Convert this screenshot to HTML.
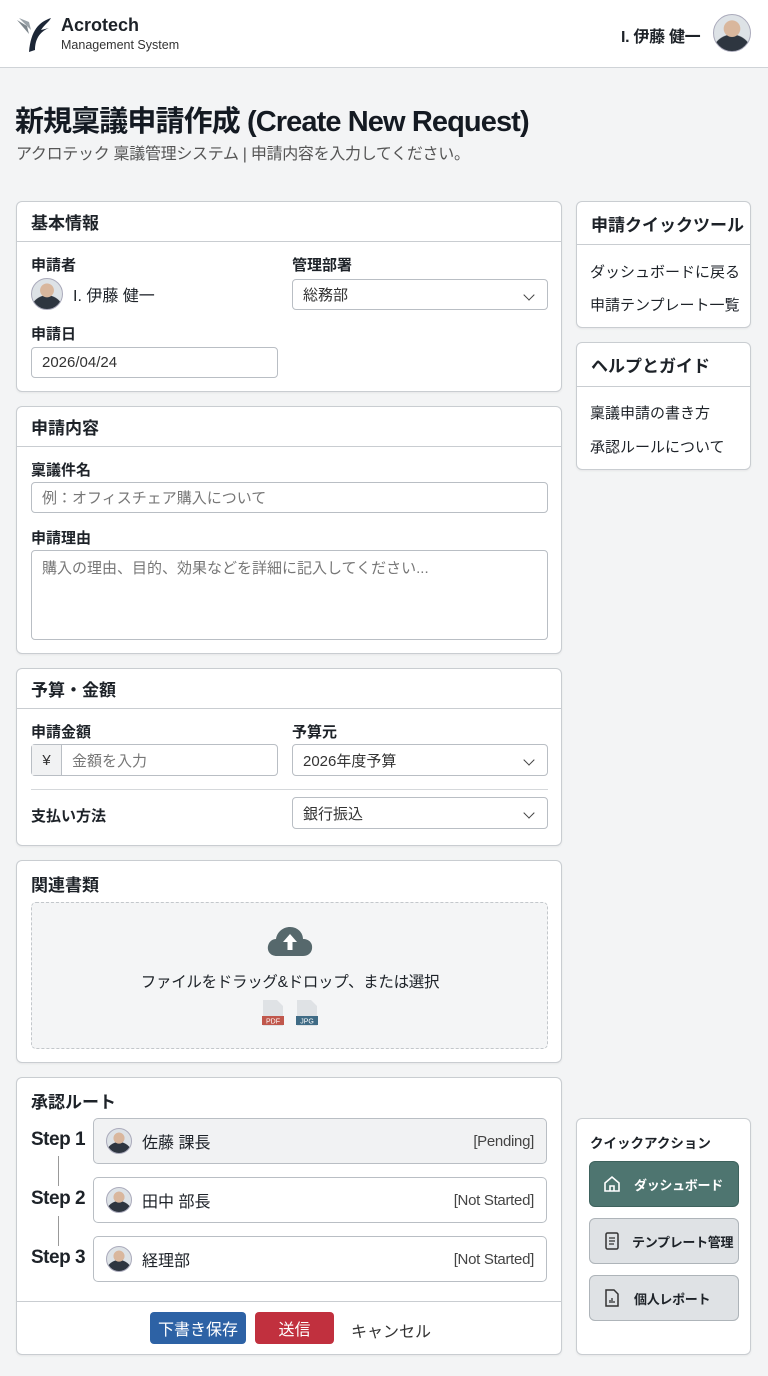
<!DOCTYPE html>
<html><head><meta charset="utf-8"><style>
*{box-sizing:border-box;margin:0;padding:0}
body{width:768px;height:1376px;background:#f3f4f5;font-family:"Liberation Sans","Noto Sans CJK JP",sans-serif;color:#1d2228;position:relative;overflow:hidden}
.a{position:absolute}
.card{position:absolute;background:#fff;border:1px solid #c9cdd1;border-radius:6px;box-shadow:0 1px 2px rgba(0,0,0,.06)}
.ch{position:absolute;left:0;right:0;top:0;height:40px;border-bottom:1px solid #c9cdd1;font-weight:bold;font-size:17px;padding:7px 0 0 14px}
.lbl{position:absolute;font-weight:bold;font-size:15px}
.inp{position:absolute;border:1px solid #b9bec4;border-radius:4px;background:#fff;font-size:15px;padding:0 10px;display:flex;align-items:center;color:#333}
.ph{color:#777}
.sel::after{content:"";position:absolute;right:14px;top:11px;width:7px;height:7px;border-right:1.6px solid #444;border-bottom:1.6px solid #444;transform:rotate(45deg)}
.step{position:absolute;left:30px;font-weight:bold;font-size:19px;letter-spacing:-0.5px}
.sbox{position:absolute;left:93px;width:454px;height:46px;border:1px solid #b9bec4;border-radius:5px;display:flex;align-items:center;padding:0 12px;font-size:16px}
.sbox .st{margin-left:auto;color:#444;font-size:15px;letter-spacing:-0.3px}
.av{width:26px;height:26px;border-radius:50%;background:radial-gradient(circle at 50% 38%,#d9b79d 0 28%,transparent 30%),radial-gradient(circle at 50% 110%,#2e3640 0 45%,transparent 47%),#dde2e6;border:1px solid #aab;margin-right:10px}
.rl{position:absolute;left:13px;font-size:15px}
.qa{position:absolute;left:12px;width:150px;height:46px;border-radius:6px;border:1px solid #aeb4b9;background:#dfe2e5;display:flex;align-items:center;padding-left:12px;font-weight:bold;font-size:13px;white-space:nowrap;letter-spacing:-0.3px}
</style></head><body>
<div class="a" style="left:0;top:0;width:768px;height:68px;background:#fff;border-bottom:1px solid #cfd3d7"></div>
<svg class="a" style="left:15px;top:16px" width="38" height="38" viewBox="0 0 38 38"><path d="M2 4 L14 18 L12 10 Z" fill="#7d868c"/><path d="M4 2 L16 14 L14 6Z" fill="#9aa2a8"/><path d="M36 2 C24 6 16 14 14 36 L20 34 C20 24 24 16 34 12 L26 14 C30 8 34 6 36 2Z" fill="#1c2636"/></svg>
<div class="a" style="left:61px;top:15px;font-size:18px;font-weight:bold">Acrotech</div>
<div class="a" style="left:61px;top:38px;font-size:12.5px;color:#333">Management System</div>
<div class="a" style="left:621px;top:23px;font-size:16px;font-weight:bold;letter-spacing:-0.3px">I. 伊藤 健一</div>
<div class="a av" style="left:713px;top:14px;width:38px;height:38px"></div>
<div class="a" style="left:15px;top:98px;font-size:29px;font-weight:bold;color:#141a22;letter-spacing:-0.9px">新規稟議申請作成 (Create New Request)</div>
<div class="a" style="left:16px;top:140px;font-size:16px;color:#555;letter-spacing:-0.3px">アクロテック 稟議管理システム | 申請内容を入力してください。</div>

<div class="card" style="left:16px;top:201px;width:546px;height:191px">
<div class="ch">基本情報</div>
<div class="lbl" style="left:14px;top:52px">申請者</div>
<div class="a" style="left:14px;top:76px;display:flex;align-items:center;font-size:16px"><div class="av" style="width:32px;height:32px"></div>I. 伊藤 健一</div>
<div class="lbl" style="left:275px;top:52px">管理部署</div>
<div class="inp sel" style="left:275px;top:77px;width:256px;height:31px">総務部</div>
<div class="lbl" style="left:14px;top:121px">申請日</div>
<div class="inp" style="left:14px;top:145px;width:247px;height:31px">2026/04/24</div>
</div>

<div class="card" style="left:16px;top:406px;width:546px;height:248px">
<div class="ch">申請内容</div>
<div class="lbl" style="left:14px;top:52px">稟議件名</div>
<div class="inp" style="left:14px;top:75px;width:517px;height:31px"><span class="ph">例：オフィスチェア購入について</span></div>
<div class="lbl" style="left:14px;top:120px">申請理由</div>
<div class="inp" style="left:14px;top:143px;width:517px;height:90px;align-items:flex-start;padding-top:6px"><span class="ph">購入の理由、目的、効果などを詳細に記入してください...</span></div>
</div>

<div class="card" style="left:16px;top:668px;width:546px;height:178px">
<div class="ch">予算・金額</div>
<div class="lbl" style="left:14px;top:52px">申請金額</div>
<div class="inp" style="left:14px;top:75px;width:247px;height:32px;padding:0"><span style="width:30px;height:100%;border-right:1px solid #b9bec4;background:#f1f2f3;display:flex;align-items:center;justify-content:center">¥</span><span class="ph" style="padding-left:10px">金額を入力</span></div>
<div class="lbl" style="left:275px;top:52px">予算元</div>
<div class="inp sel" style="left:275px;top:75px;width:256px;height:32px">2026年度予算</div>
<div class="a" style="left:14px;top:120px;width:517px;border-top:1px solid #d5d8db"></div>
<div class="lbl" style="left:14px;top:136px">支払い方法</div>
<div class="inp sel" style="left:275px;top:128px;width:256px;height:32px">銀行振込</div>
</div>

<div class="card" style="left:16px;top:860px;width:546px;height:203px">
<div class="lbl" style="left:14px;top:10px;font-size:17px">関連書類</div>
<div class="a" style="left:14px;top:41px;width:517px;height:147px;border:1.5px dashed #c3c7cb;border-radius:5px;background:#f4f5f6"></div>
<svg class="a" style="left:250px;top:64px" width="46" height="32" viewBox="0 0 46 32"><path d="M10 31 C3 31 0 26 1 21 C2 16 6 14 9 14 C10 7 16 2 23 2 C31 2 36 8 36 14 C42 14 46 18 45 24 C44 29 40 31 36 31 Z" fill="#56686c"/><path d="M23 9 L16 17 L20.5 17 L20.5 25 L25.5 25 L25.5 17 L30 17Z" fill="#fff"/></svg>
<div class="a" style="left:0;width:546px;top:109px;text-align:center;font-size:15.5px;letter-spacing:-0.3px">ファイルをドラッグ&amp;ドロップ、または選択</div>
<svg class="a" style="left:245px;top:139px" width="22" height="28" viewBox="0 0 22 28"><path d="M1 0 H15 L21 6 V26 H1Z" fill="#dfe2e5"/><rect x="0" y="16" width="22" height="9" fill="#c0574c"/><text x="11" y="23.5" font-size="7" fill="#fff" text-anchor="middle" font-family="Liberation Sans">PDF</text></svg>
<svg class="a" style="left:279px;top:139px" width="22" height="28" viewBox="0 0 22 28"><path d="M1 0 H15 L21 6 V26 H1Z" fill="#dfe2e5"/><rect x="0" y="16" width="22" height="9" fill="#3f6b85"/><text x="11" y="23.5" font-size="7" fill="#fff" text-anchor="middle" font-family="Liberation Sans">JPG</text></svg>
</div>

<div class="card" style="left:16px;top:1077px;width:546px;height:278px">
<div class="lbl" style="left:14px;top:10px;font-size:17px">承認ルート</div>
<div class="a" style="left:41px;top:78px;height:30px;border-left:1px solid #999"></div>
<div class="a" style="left:41px;top:138px;height:30px;border-left:1px solid #999"></div>
<div class="a" style="left:0;right:0;top:223px;border-top:1px solid #c9cdd1"></div>
<div class="a" style="left:133px;top:234px;width:96px;height:32px;background:#2d62a5;border-radius:4px;color:#fff;font-size:16px;display:flex;align-items:center;justify-content:center">下書き保存</div>
<div class="a" style="left:238px;top:234px;width:79px;height:32px;background:#c1303e;border-radius:4px;color:#fff;font-size:16px;display:flex;align-items:center;justify-content:center">送信</div>
<div class="a" style="left:334px;top:240px;font-size:16px;color:#333">キャンセル</div>
</div>
<div class="step" style="left:31px;top:1129px">Step 1</div>
<div class="sbox" style="top:1118px;background:#f1f2f3"><div class="av"></div>佐藤 課長<span class="st">[Pending]</span></div>
<div class="step" style="left:31px;top:1188px">Step 2</div>
<div class="sbox" style="top:1177px;background:#fff"><div class="av"></div>田中 部長<span class="st">[Not Started]</span></div>
<div class="step" style="left:31px;top:1247px">Step 3</div>
<div class="sbox" style="top:1236px;background:#fff"><div class="av"></div>経理部<span class="st">[Not Started]</span></div>

<div class="card" style="left:576px;top:201px;width:175px;height:127px">
<div class="ch" style="height:43px;padding-top:9px">申請クイックツール</div>
<div class="rl" style="top:59px">ダッシュボードに戻る</div>
<div class="rl" style="top:92px">申請テンプレート一覧</div>
</div>
<div class="card" style="left:576px;top:342px;width:175px;height:128px">
<div class="ch" style="height:44px;padding-top:9px">ヘルプとガイド</div>
<div class="rl" style="top:59px">稟議申請の書き方</div>
<div class="rl" style="top:93px">承認ルールについて</div>
</div>
<div class="card" style="left:576px;top:1118px;width:175px;height:237px">
<div class="a" style="left:13px;top:13px;font-weight:bold;font-size:13.5px">クイックアクション</div>
<div class="qa" style="top:42px;background:#4e7570;border-color:#3e625d;color:#fff"><svg width="20" height="20" viewBox="0 0 20 20" style="margin-right:12px"><path d="M3 9 L10 3 L17 9 V17 H3Z M8 17 V12 H12 V17" fill="none" stroke="#fff" stroke-width="1.6"/></svg>ダッシュボード</div>
<div class="qa" style="top:99px"><svg width="20" height="20" viewBox="0 0 20 20" style="margin-right:10px"><rect x="4" y="2" width="12" height="16" rx="1.5" fill="none" stroke="#333" stroke-width="1.5"/><path d="M7 7H13M7 10H13M7 13H12" stroke="#333" stroke-width="1.3"/></svg>テンプレート管理</div>
<div class="qa" style="top:156px"><svg width="20" height="20" viewBox="0 0 20 20" style="margin-right:12px"><path d="M4 2H12L16 6V18H4Z" fill="none" stroke="#333" stroke-width="1.5"/><path d="M8 15V12M10 15V10M12 15V13" stroke="#333" stroke-width="1.3"/></svg>個人レポート</div>
</div>
</body></html>
